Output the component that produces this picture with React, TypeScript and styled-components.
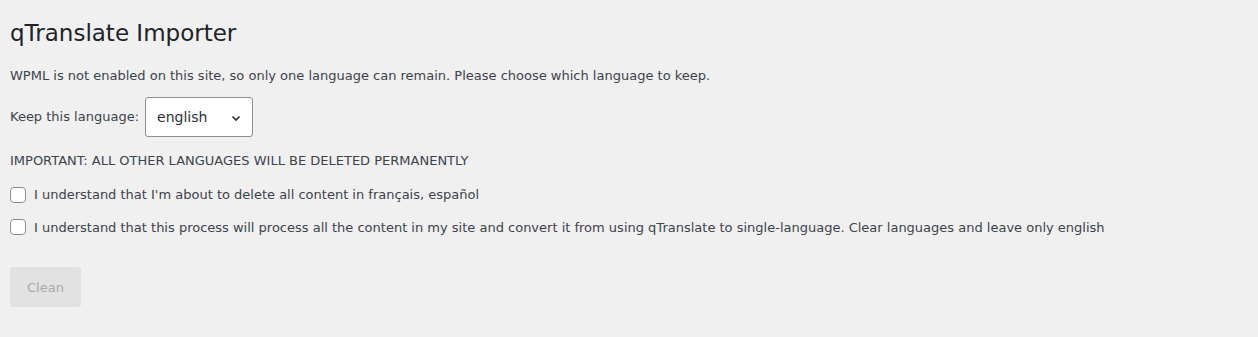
import React from "react";
import styled, { createGlobalStyle } from "styled-components";

const GlobalStyle = createGlobalStyle`
  html, body {
    margin: 0;
    background: #f0f0f1;
  }
  body {
    font-family: "DejaVu Sans", "Noto Sans", sans-serif;
    font-size: 13px;
    color: #3c434a;
  }
`;

const Wrap = styled.div`
  padding: 0 10px;
  height: 337px;
  box-sizing: border-box;
`;

const Title = styled.h1`
  margin: 0;
  padding: 19px 0 0;
  font-size: 23px;
  font-weight: 400;
  line-height: 29px;
  color: #1d2327;
`;

const Text = styled.p<{ $top?: number }>`
  margin: ${(p) => p.$top ?? 13}px 0 0;
  line-height: 1.5;
`;

const KeepRow = styled.div`
  display: flex;
  align-items: center;
  gap: 6px;
  margin-top: 11px;
`;

const SelectBox = styled.div`
  position: relative;
  width: 108px;
  height: 40px;
  box-sizing: border-box;
  border: 1px solid #8c8f94;
  border-radius: 3px;
  background: #fff;
  display: flex;
  align-items: center;
  padding-left: 11px;
  font-size: 14px;
  color: #2c3338;
`;

const Chevron = styled.svg`
  position: absolute;
  right: 10px;
  top: 14px;
`;

const CheckRow = styled.label<{ $top: number }>`
  display: flex;
  align-items: center;
  gap: 8px;
  margin-top: ${(p) => p.$top}px;
  line-height: 1.5;
`;

const Box = styled.span`
  width: 16px;
  height: 16px;
  box-sizing: border-box;
  border: 1px solid #8c8f94;
  border-radius: 4px;
  background: #fff;
  flex: none;
`;

const Button = styled.button`
  margin-top: 30px;
  width: 71px;
  height: 40px;
  border: none;
  border-radius: 3px;
  background: #e2e2e3;
  color: #a7aaad;
  font-family: inherit;
  font-size: 13px;
  padding: 0;
`;

export default function App() {
  return (
    <>
      <GlobalStyle />
      <Wrap>
        <Title>qTranslate Importer</Title>
        <Text $top={18}>
          WPML is not enabled on this site, so only one language can remain. Please choose which language to keep.
        </Text>
        <KeepRow>
          <span>Keep this language:</span>
          <SelectBox>
            english
            <Chevron width="12" height="12" viewBox="0 0 12 12">
              <path d="M2.5 4.5 L6 8 L9.5 4.5" fill="none" stroke="#2c3338" strokeWidth="1.7" />
            </Chevron>
          </SelectBox>
        </KeepRow>
        <Text $top={14}>IMPORTANT: ALL OTHER LANGUAGES WILL BE DELETED PERMANENTLY</Text>
        <CheckRow $top={15}>
          <Box />
          I understand that I'm about to delete all content in français, español
        </CheckRow>
        <CheckRow $top={13}>
          <Box />
          I understand that this process will process all the content in my site and convert it from using qTranslate to single-language. Clear languages and leave only english
        </CheckRow>
        <Button disabled>Clean</Button>
      </Wrap>
    </>
  );
}
